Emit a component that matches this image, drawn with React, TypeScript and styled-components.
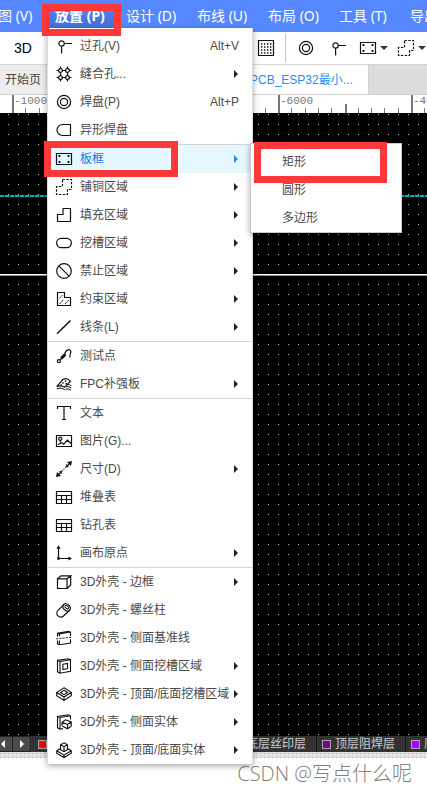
import React from "react";
import styled, { createGlobalStyle, css } from "styled-components";

const cjk = `"Noto Sans CJK SC", sans-serif`;

const GlobalStyle = createGlobalStyle`
  * { box-sizing: border-box; }
  body { margin: 0; background: #fff; overflow: hidden; }
  button { border: 0; margin: 0; padding: 0; background: none; font: inherit; color: inherit; text-align: left; }
  ul { list-style: none; margin: 0; padding: 0; }
`;

const Page = styled.div`
  position: relative;
  display: flex;
  flex-direction: column;
  min-height: 100vh;
  overflow: hidden;
  font: 12px/16px "Liberation Sans", ${cjk};
  color: #4a4a4a;
`;

const MenuBar = styled.nav`
  display: flex;
  gap: 6px;
  height: 32px;
  margin-left: -22px;
  background: #5588ff;
  font: 14px/32px "Noto Sans", ${cjk};
  color: #fff;
`;

const MenuBarButton = styled.button<{ $active?: boolean }>`
  flex: none;
  min-width: 65px;
  padding: 0 6px;
  white-space: nowrap;
  ${(p) =>
    p.$active &&
    css`
      width: 65px;
      font-weight: 700;
      background: linear-gradient(#5588ff, #416bd0);
    `}
`;

const Toolbar = styled.div`
  display: flex;
  align-items: center;
  justify-content: space-between;
  height: 33px;
  padding-left: 14px;
  background: #fff;
  border-bottom: 1px solid #d4d4d4;
  color: #000;
`;

const ToolGroup = styled.div`
  display: flex;
  align-items: center;
`;

const ToolButton = styled.button<{ $gap?: number }>`
  display: flex;
  align-items: center;
  gap: 4px;
  margin-right: ${(p) => p.$gap ?? 0}px;
`;

const TextToolButton = styled.button`
  font-size: 14px;
`;

const Divider = styled.span`
  width: 1px;
  height: 28px;
  margin-right: 12px;
  background: #c8c8c8;
`;

const Tabs = styled.div`
  display: flex;
  height: 30px;
  background: #dcdcdc;
  border-bottom: 1px solid #d0d0d0;
`;

const Tab = styled.button<{ $active?: boolean }>`
  flex: none;
  width: ${(p) => (p.$active ? 137 : 232)}px;
  padding-left: ${(p) => (p.$active ? 18 : 5)}px;
  background: ${(p) => (p.$active ? "#fff" : "#ededed")};
  color: ${(p) => (p.$active ? "#1890ff" : "#444")};
  border-right: 1px solid #d0d0d0;
  white-space: nowrap;
`;

const Ruler = styled.div`
  display: flex;
  height: 18px;
  margin-left: -121px;
  background: #fff;
`;

const Division = styled.div`
  position: relative;
  flex: none;
  display: grid;
  grid-template-columns: repeat(10, 1fr);
  align-items: end;
  width: 133px;
`;

const Tick = styled.i<{ $height: number }>`
  height: ${(p) => p.$height}px;
  border-left: ${(p) => (p.$height > 5 ? 2 : 1)}px solid #777;
`;

const RulerLabel = styled.span`
  position: absolute;
  left: 2px;
  top: 0;
  font: 11px/12px "Liberation Mono", monospace;
  color: #777;
`;

const Board = styled.main`
  position: relative;
  flex: 1;
  background-color: #000;
  background-image: linear-gradient(to right, transparent 1px, #000 1px), linear-gradient(#c0c0c0 1px, #000 1px);
  background-size: 10px 10px;
  background-position: 8px 1px;
`;

const GuideLine = styled.div`
  position: absolute;
  left: 0;
  right: 0;
  top: 82px;
  height: 2px;
  background: repeating-linear-gradient(to right, #00b4b4 0 4px, #003c3c 4px 5px);
`;

const OutlineLine = styled.div`
  position: absolute;
  left: 0;
  right: 0;
  top: 161px;
  height: 2px;
  background: #fff;
  border-bottom: 1px solid #888;
`;

const LayerBar = styled.div`
  display: flex;
  height: 16px;
  background: #333;
  color: #ccc;
`;

const LayerNav = styled.div`
  flex: none;
  display: flex;
  width: 31px;
  margin-right: 2px;
  background: #4a4a4a;
  border: 1px solid #222;
  border-left: 0;
  border-radius: 0 4px 4px 0;
`;

const LayerNavButton = styled.button`
  display: flex;
  align-items: center;
  width: 12px;
  padding-left: 1px;
  & + & {
    width: 18px;
    border-left: 1px solid #222;
    padding-left: 7px;
  }
`;

const Layer = styled.button`
  flex: none;
  display: flex;
  align-items: center;
  gap: 4px;
  padding: 0 10px 0 5px;
  border-right: 1px solid #181818;
  white-space: nowrap;
`;

const Swatch = styled.span<{ $color: string }>`
  width: 9px;
  height: 9px;
  border: 1px solid #aaa;
  background: ${(p) => p.$color};
`;

const Strip = styled.div`
  height: 6px;
  background-color: #e2e2e2;
  background-image: linear-gradient(to right, transparent 1px, #e2e2e2 1px), linear-gradient(#aaa 1px, #e2e2e2 1px);
  background-size: 4px 4px;
  background-position: 0 1px;
`;

const Footer = styled.footer`
  display: flex;
  justify-content: flex-end;
  height: 36px;
  padding-right: 15px;
  background: #fff;
  font: 20px/32px "Open Sans", ${cjk};
  font-weight: 300;
  color: #808080;
`;

const panel = css`
  position: absolute;
  background: #fff;
  box-shadow: 0 2px 6px rgba(0, 0, 0, 0.35);
`;

const Menu = styled.div`
  ${panel}
  left: 47px;
  top: 28px;
  width: 206px;
  padding-top: 4px;
  border: 0 solid #ddd;
  border-width: 0 1px;
`;

const MenuGroup = styled.ul`
  & + & {
    border-top: 1px solid #d4d4d4;
  }
`;

const MenuItem = styled.button<{ $active?: boolean }>`
  display: flex;
  align-items: center;
  gap: 8px;
  width: 100%;
  height: 28px;
  padding: 0 13px 0 8px;
  white-space: nowrap;
  background: ${(p) => (p.$active ? "#e6f7ff" : "transparent")};
  color: ${(p) => (p.$active ? "#0e78e6" : "inherit")};
`;

const ItemLabel = styled.span`
  flex: 1;
  min-width: 0;
`;

const SubMenu = styled.ul`
  && {
    ${panel}
    left: 250px;
    top: 143px;
    width: 152px;
    padding: 4px 0 0 23px;
    border: 1px solid #ccc;
  }
`;

const Mark = styled.div<{ $x: number; $y: number; $w: number; $h: number }>`
  position: absolute;
  left: ${(p) => p.$x}px;
  top: ${(p) => p.$y}px;
  width: ${(p) => p.$w}px;
  height: ${(p) => p.$h}px;
  border: 7px solid #fc3838;
  pointer-events: none;
`;

const IconSvg = styled.svg`
  flex: none;
  display: block;
  overflow: visible;
  fill: none;
  stroke: #111;
  stroke-width: 1.2;
`;

const Arrow = styled.svg`
  flex: none;
  display: block;
  margin-right: 1px;
  margin-left: -8px;
`;

const icons: Record<string, React.ReactNode> = {
  via: <path d="M8.2 5.5H16M5.6 8.2V15.5M5.6 2.8a2.7 2.7 0 1 0 0 5.4 2.7 2.7 0 0 0 0-5.4" />,
  stitch: (
    <>
      <circle cx="4.5" cy="4.5" r="1.9" />
      <circle cx="11.5" cy="4.5" r="1.9" />
      <circle cx="4.5" cy="11.5" r="1.9" />
      <circle cx="11.5" cy="11.5" r="1.9" />
      <path d="M.5 4.5h2.1M6.4 4.5h3.2M13.4 4.5h2.1M.5 11.5h2.1M6.4 11.5h3.2M13.4 11.5h2.1M4.5.5v2.1M4.5 6.4v3.2M4.5 13.4v2.1M11.5.5v2.1M11.5 6.4v3.2M11.5 13.4v2.1" />
    </>
  ),
  pad: (
    <>
      <circle cx="8" cy="8" r="6.6" />
      <circle cx="8" cy="8" r="3.6" />
    </>
  ),
  oddPad: <path d="M14.5 2.5H6.5a5.5 5.5 0 0 0 0 11h8z" />,
  board: (
    <>
      <path d="M.5 2.5h15v11H.5z" />
      <path d="M2.6 5h1.8M11.6 5h1.8M2.6 11h1.8M11.6 11h1.8" strokeWidth="1.8" />
    </>
  ),
  copper: <path d="M6.5.5H15.5V10.5H11.5V15.5H.5V7.5H6.5z" strokeDasharray="2.4 1.4" />,
  fill: <path d="M1.5 14.5V7.5H7V1.5H14.5V14.5z" />,
  slot: <rect x=".6" y="3.3" width="14.8" height="9.4" rx="4.7" />,
  forbid: (
    <>
      <circle cx="8" cy="8" r="7.3" />
      <path d="M2.8 2.8 13.2 13.2" />
    </>
  ),
  keep: (
    <>
      <path d="M1.5 1.5H8.5V6.5H14.5V14.5H1.5z" />
      <path d="M3.5 7.2 6.5 4.2M3.5 13 7.2 9M9 13 12.5 9.2" strokeWidth="1" strokeDasharray="2.4 .7" />
    </>
  ),
  line: <path d="M1 14.8 14.5 1.5" strokeWidth="1.5" />,
  probe: (
    <>
      <circle cx="2.9" cy="13.2" r="1.5" />
      <path d="M4 12 5.5 10.5" />
      <path d="M5.2 10.6 9.3 6.2" strokeWidth="3" />
      <path d="M8.8 6.5C9.3 1.5 13.8 .2 14.8 3.2 15.4 5.4 12.9 7.3 14 9.5" />
    </>
  ),
  fpc: (
    <>
      <path d="M.8 10.7 7 3.3Q10.8 1.5 14.5 5.2L8.5 11.3Q5 8.7.8 10.7z" />
      <path d="M.8 12.8Q5.2 11 8.8 13.6M11.5 8.7Q13.8 8.2 15.3 9.8M10 10.8Q12.8 10 15.3 12M9.5 13.2Q12.5 12.4 15 14.2" strokeWidth="1" />
      <path d="M6.2 7h1.4M8.8 5h1.4M9.6 7.7H11M4.6 9H6" strokeWidth="1.4" />
    </>
  ),
  text: <path d="M1.5 4V1.5H14.5V4M8 1.5V14.5M5.9 14.5h4.2" />,
  image: (
    <>
      <path d="M.5 2.5h15v11H.5z" />
      <circle cx="4.3" cy="5.8" r="1.6" />
      <path d="M4.3 7.4v2M1.8 11.8 6 9.7 7.8 11.2 11.4 7.2 15 10.5" />
    </>
  ),
  dimension: (
    <>
      <path d="M2 14 6.7 9.3M7.6 8.4l.8-.8M9.3 6.7 14 2M3.6 10.2l2.4 2.4M10 3.6l2.4 2.4" />
      <path d="M0 16l1-5 4 4zM16 0l-5 1 4 4z" fill="#111" stroke="none" />
    </>
  ),
  table: <path d="M.5 2.5h15v12H.5zM.5 6.5h15M.5 10.5h15M5.5 6.5v8M10.5 6.5v8" />,
  origin: (
    <>
      <path d="M2.5 2V13.5H14.5" />
      <path d="M2.5.2 4.6 3.8H.4zM16 13.5l-3.6-2.1v4.2z" fill="#111" stroke="none" />
      <circle cx="2.5" cy="13.5" r="1.4" fill="#111" stroke="none" />
    </>
  ),
  cube: <path d="M1.5 4.8H11V14.5H1.5zM1.5 4.8 5 1.8H14.7L11 4.8M14.7 1.8V11L11 14.5" />,
  post: (
    <>
      <path d="M7.6 2.9 2 8.4A3.8 3.8 0 0 0 7.5 14L13.6 8.2" />
      <ellipse cx="10.6" cy="5.4" rx="4.2" ry="3.2" transform="rotate(42 10.6 5.4)" />
      <ellipse cx="10.8" cy="5.2" rx="2.2" ry="1.4" transform="rotate(42 10.8 5.2)" strokeWidth="1" />
    </>
  ),
  baseline: (
    <>
      <path d="M1.5 6.5V3.2L12.6 1.2 14.5 2V6M1.5 3.2 3.4 4 14.5 2M3.4 4V6.3M1.5 10.4V13.8L3.4 14.8 14.5 13V9.3M3.4 14.8V10.4" strokeWidth="1.1" />
      <path d="M.3 8.9 15.7 7.2" strokeDasharray="2 1.2" strokeWidth="1" />
    </>
  ),
  sideSlot: (
    <path
      d="M4 3.5 14.5 1.8V13.2L4 15.2zM4 3.5 1.5 2.4V13.8L4 15.2M1.5 2.4 12 .7 14.5 1.8M6.9 6.2 11.5 5.4V10.6L6.9 11.5z"
      strokeWidth="1.1"
    />
  ),
  topSlot: (
    <path
      d="M8 1.8 15.3 6.4 8 11 .7 6.4zM.7 6.4V9.6L8 14.4 15.3 9.6V6.4M8 11V14.4M8 4.3 11.6 6.4 8 8.6 4.4 6.4z"
      strokeWidth="1.1"
    />
  ),
  sideSolid: (
    <path
      d="M4 15.2 1.5 13.8V2.4L12 .7 14.5 1.8V5.5M1.5 2.4 4 3.5 14.5 1.8M4 3.5V15.2L7 14.6M6 8.2 9.5 5.8 15.2 8V12.3L11.5 14.8 6.5 12.3M6 8.2V12M6 8.2 11.5 10.5 15.2 8M11.5 10.5V14.8"
      strokeWidth="1.1"
    />
  ),
  topSolid: (
    <path
      d="M4.6 6.3.7 8.8V11.2L8 15.5 15.3 11.2V8.8L11.4 6.3M.7 8.8 8 13.1 15.3 8.8M8 13.1V15.5M8 .8 11.4 2.7V7.7L8 9.7 4.6 7.7V2.7zM4.6 2.7 8 4.7 11.4 2.7M8 4.7V9.7"
      strokeWidth="1.1"
    />
  ),
  grid: (
    <>
      <path d="M.5.5h15v15H.5z" />
      <path d="M3 4h11M3 7h11M3 10h11M3 13h11" strokeDasharray="1.4 1.6" strokeWidth="1.4" />
    </>
  ),
};

const Icon = ({ name }: { name: string }) => (
  <IconSvg width="16" height="16" viewBox="0 0 16 16" aria-hidden="true">
    {icons[name]}
  </IconSvg>
);

const Caret = () => (
  <svg width="8" height="4" viewBox="0 0 8 4" aria-hidden="true">
    <path d="M0 0h8L4 4z" fill="#333" />
  </svg>
);

type Entry = { icon: string; label: string; key?: string; more?: boolean; active?: boolean };

const groups: Entry[][] = [
  [
    { icon: "via", label: "过孔(V)", key: "Alt+V" },
    { icon: "stitch", label: "缝合孔...", more: true },
    { icon: "pad", label: "焊盘(P)", key: "Alt+P" },
    { icon: "oddPad", label: "异形焊盘" },
  ],
  [
    { icon: "board", label: "板框", more: true, active: true },
    { icon: "copper", label: "铺铜区域", more: true },
    { icon: "fill", label: "填充区域", more: true },
    { icon: "slot", label: "挖槽区域", more: true },
    { icon: "forbid", label: "禁止区域", more: true },
    { icon: "keep", label: "约束区域", more: true },
    { icon: "line", label: "线条(L)", more: true },
  ],
  [
    { icon: "probe", label: "测试点" },
    { icon: "fpc", label: "FPC补强板", more: true },
  ],
  [
    { icon: "text", label: "文本" },
    { icon: "image", label: "图片(G)..." },
    { icon: "dimension", label: "尺寸(D)", more: true },
    { icon: "table", label: "堆叠表" },
    { icon: "table", label: "钻孔表" },
    { icon: "origin", label: "画布原点", more: true },
  ],
  [
    { icon: "cube", label: "3D外壳 - 边框", more: true },
    { icon: "post", label: "3D外壳 - 螺丝柱" },
    { icon: "baseline", label: "3D外壳 - 侧面基准线" },
    { icon: "sideSlot", label: "3D外壳 - 侧面挖槽区域", more: true },
    { icon: "topSlot", label: "3D外壳 - 顶面/底面挖槽区域", more: true },
    { icon: "sideSolid", label: "3D外壳 - 侧面实体", more: true },
    { icon: "topSolid", label: "3D外壳 - 顶面/底面实体", more: true },
  ],
];

const menus = ["视图 (V)", "放置 (P)", "设计 (D)", "布线 (U)", "布局 (O)", "工具 (T)", "导出 (E)"];

const layers = [
  ["顶层", "#ff0000"],
  ["底层", "#0000ff"],
  ["顶层丝印层", "#ffcc00"],
  ["底层丝印层", "#66cc33"],
  ["顶层阻焊层", "#800080"],
  ["底层阻焊层", "#aa00ff"],
];

export default function App() {
  return (
    <Page>
      <GlobalStyle />
      <MenuBar>
        {menus.map((m) => (
          <MenuBarButton key={m} $active={m.startsWith("放置")}>
            {m}
          </MenuBarButton>
        ))}
      </MenuBar>
      <Toolbar>
        <TextToolButton>3D</TextToolButton>
        <ToolGroup>
          <ToolButton $gap={11} aria-label="网格">
            <Icon name="grid" />
          </ToolButton>
          <Divider />
          <ToolButton $gap={16} aria-label="焊盘">
            <Icon name="pad" />
          </ToolButton>
          <ToolButton $gap={14} aria-label="过孔">
            <Icon name="via" />
          </ToolButton>
          <ToolButton $gap={10} aria-label="板框">
            <Icon name="board" />
            <Caret />
          </ToolButton>
          <ToolButton $gap={1} aria-label="铺铜">
            <Icon name="copper" />
            <Caret />
          </ToolButton>
        </ToolGroup>
      </Toolbar>
      <Tabs>
        <Tab>开始页</Tab>
        <Tab $active>PCB_ESP32最小...</Tab>
      </Tabs>
      <Ruler>
        {["-12000", "-10000", "-8000", "-6000", "-4000"].map((label) => (
          <Division key={label}>
            {Array.from({ length: 10 }, (_, i) => (
              <Tick key={i} $height={i === 0 ? 18 : i === 5 ? 9 : 5} />
            ))}
            <RulerLabel>{label}</RulerLabel>
          </Division>
        ))}
      </Ruler>
      <Board>
        <GuideLine />
        <OutlineLine />
      </Board>
      <LayerBar>
        <LayerNav>
          <LayerNavButton aria-label="上一层">
            <svg width="4" height="8" viewBox="0 0 4 8">
              <path d="M4 0v8L0 4z" fill="#fff" />
            </svg>
          </LayerNavButton>
          <LayerNavButton aria-label="下一层">
            <svg width="4" height="8" viewBox="0 0 4 8">
              <path d="M0 0v8l4-4z" fill="#fff" />
            </svg>
          </LayerNavButton>
        </LayerNav>
        {layers.map(([name, color]) => (
          <Layer key={name}>
            <Swatch $color={color} />
            {name}
          </Layer>
        ))}
      </LayerBar>
      <Strip />
      <Footer>CSDN @写点什么呢</Footer>

      <Menu>
        {groups.map((group, g) => (
          <MenuGroup key={g}>
            {group.map((e) => (
              <li key={e.label}>
                <MenuItem $active={e.active}>
                  <Icon name={e.icon} />
                  <ItemLabel>{e.label}</ItemLabel>
                  {e.key && <span>{e.key}</span>}
                  {e.more && (
                    <Arrow width="4" height="8" viewBox="0 0 4 8" aria-hidden="true">
                      <path d="M0 0v8l4-4z" fill={e.active ? "#1890ff" : "#222"} />
                    </Arrow>
                  )}
                </MenuItem>
              </li>
            ))}
          </MenuGroup>
        ))}
      </Menu>
      <SubMenu>
        {["矩形", "圆形", "多边形"].map((s) => (
          <li key={s}>
            <MenuItem>{s}</MenuItem>
          </li>
        ))}
      </SubMenu>
      <Mark $x={42} $y={4} $w={79} $h={32} />
      <Mark $x={44} $y={141} $w={134} $h={36} />
      <Mark $x={254} $y={142} $w={133} $h={41} />
    </Page>
  );
}
